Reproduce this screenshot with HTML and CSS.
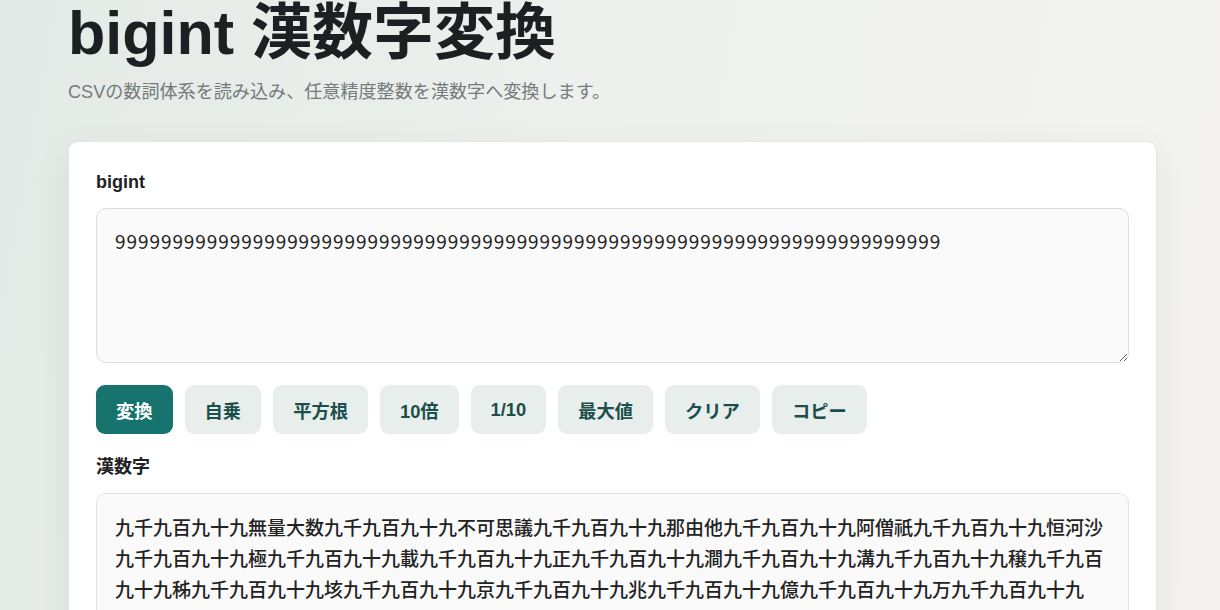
FILE: index.html
```html
<!DOCTYPE html>
<html lang="ja">
<head>
<meta charset="utf-8">
<title>bigint 漢数字変換</title>
<link rel="stylesheet" href="styles.css">
</head>
<body>
<main class="page">
  <header class="head">
    <h1 class="title">bigint 漢数字変換</h1>
    <p class="subtitle">CSVの数詞体系を読み込み、任意精度整数を漢数字へ変換します。</p>
  </header>
  <section class="card">
    <label class="label" for="num">bigint</label>
    <textarea id="num" class="input">999999999999999999999999999999999999999999999999999999999999999999999999</textarea>
    <div class="actions">
      <button class="btn btn-primary">変換</button>
      <button class="btn">自乗</button>
      <button class="btn">平方根</button>
      <button class="btn">10倍</button>
      <button class="btn">1/10</button>
      <button class="btn">最大値</button>
      <button class="btn">クリア</button>
      <button class="btn">コピー</button>
    </div>
    <div class="label">漢数字</div>
    <div class="output">九千九百九十九無量大数九千九百九十九不可思議九千九百九十九那由他九千九百九十九阿僧祇九千九百九十九恒河沙九千九百九十九極九千九百九十九載九千九百九十九正九千九百九十九澗九千九百九十九溝九千九百九十九穣九千九百九十九秭九千九百九十九垓九千九百九十九京九千九百九十九兆九千九百九十九億九千九百九十九万九千九百九十九</div>
  </section>
</main>
</body>
</html>
```
FILE: styles.css
```css
* { box-sizing: border-box; }
html, body { margin: 0; height: 100%; }
body {
  background: linear-gradient(100deg, #e4eae7 0%, #edf0ec 45%, #f4f3ef 100%);
  font-family: "Liberation Sans", "Noto Sans CJK JP", sans-serif;
  color: #1f2224;
  overflow: hidden;
}
.page {
  padding: 0 0 0 68px;
  width: 1157px;
}
.title {
  margin: 0;
  font-size: 61px;
  line-height: 66px;
  font-weight: 700;
  color: #1d2023;
  letter-spacing: 0;
}
.subtitle {
  margin: 13px 0 0;
  font-size: 18.1px;
  line-height: 27px;
  color: #737b7b;
}
.card {
  margin-top: 35px;
  background: #fff;
  border: 1px solid #e5e7e5;
  border-radius: 10px;
  box-shadow: 0 12px 36px rgba(40, 50, 45, 0.08);
  padding: 27px 27px 40px;
  height: 520px;
}
.label {
  display: block;
  font-size: 18px;
  line-height: 26px;
  font-weight: 700;
  color: #1f2224;
  margin-bottom: 13px;
}
.input {
  display: block;
  width: 100%;
  height: 155px;
  padding: 17px 18px;
  border: 1px solid #dcdedd;
  border-radius: 10px;
  background: #fafafa;
  font-family: "Noto Sans CJK JP", sans-serif;
  font-size: 19px;
  line-height: 30px;
  color: #222;
  letter-spacing: 0.93px;
  resize: vertical;
}
.actions {
  display: flex;
  gap: 12px;
  margin: 22px 0 20px;
}
.btn {
  height: 49px;
  padding: 0 20px;
  border: none;
  border-radius: 9px;
  background: #e8eeec;
  color: #1c4f4b;
  font-family: "Liberation Sans", "Noto Sans CJK JP", sans-serif;
  font-size: 18.3px;
  font-weight: 700;
}
.btn-primary {
  background: #17736d;
  color: #fff;
}
.output {
  border: 1px solid #e2e4e3;
  border-radius: 10px;
  background: #fafafa;
  padding: 17px 18px;
  font-family: "Noto Sans CJK JP", sans-serif;
  font-size: 19px;
  line-height: 31px;
  font-weight: 500;
  color: #222;
  min-height: 200px;
}
```
